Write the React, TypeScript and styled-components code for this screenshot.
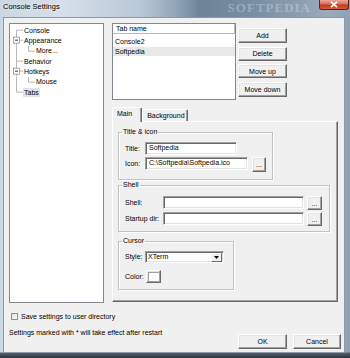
import React from 'react';
import styled, { createGlobalStyle } from 'styled-components';

const GlobalStyle = createGlobalStyle`
  html, body {
    margin: 0;
    padding: 0;
    overflow: hidden;
  }
  body {
    font-family: "Liberation Sans", Arial, sans-serif;
    font-size: 7px;
    color: #000;
  }
`;

const Window = styled.div`
  width: 350px;
  height: 358px;
  display: flex;
  flex-direction: column;
  background:
    linear-gradient(180deg, rgba(0, 0, 0, 0) 352px, #55606c 353px, #2c323a 358px),
    linear-gradient(90deg, #cbd7e3 0px, #d6e0ea 60px, #b9c8d7 140px, #93a6ba 175px, #6e8398 200px, #7b8fa4 260px, #9aabbd 330px, #8fa1b4 350px);
`;

const TitleBar = styled.div`
  height: 17px;
  display: flex;
  align-items: flex-start;
  justify-content: space-between;
  flex-shrink: 0;
`;

const TitleText = styled.div`
  padding-left: 3px;
  font-size: 7.5px;
  line-height: 14px;
  color: #000;
  text-shadow: 0 0 4px rgba(255, 255, 255, 0.9);
`;

const Watermark = styled.div`
  margin-left: auto;
  margin-right: 8px;
  font-family: "Liberation Serif", serif;
  font-weight: bold;
  font-size: 13px;
  line-height: 15px;
  letter-spacing: 1px;
  color: rgba(225, 233, 242, 0.35);
`;

const CloseButton = styled.div`
  width: 30px;
  height: 10px;
  margin-right: 1px;
  box-sizing: border-box;
  border: 1px solid #5c2218;
  border-top: none;
  border-radius: 0 0 3px 3px;
  background: linear-gradient(180deg, #e9a998 0%, #d9705a 45%, #c2391d 55%, #d45b3c 100%);
  display: flex;
  align-items: center;
  justify-content: center;
`;

const Client = styled.div`
  flex: 1;
  margin: 0 5px 5px 3px;
  background: #f0f0f0;
  border: 1px solid #8898a9;
  display: flex;
  flex-direction: column;
`;

const MainRow = styled.div`
  display: flex;
  gap: 8px;
  padding: 5px 0 0 5px;
`;

const TreeBox = styled.div`
  width: 95px;
  height: 280px;
  box-sizing: border-box;
  background: #fff;
  border: 1px solid #828790;
  padding-top: 1px;
`;

const TreeRow = styled.div`
  height: 10.33px;
  display: flex;
  align-items: center;
`;

const TreeLabel = styled.span<{ $selected?: boolean }>`
  padding: 0 1px;
  line-height: 9px;
  background: ${({ $selected }) => ($selected ? '#e3e3e3' : 'transparent')};
`;

const RightCol = styled.div`
  width: 226px;
  display: flex;
  flex-direction: column;
`;

const TopRow = styled.div`
  display: flex;
  gap: 2px;
`;

const ListBox = styled.div`
  width: 124px;
  height: 77px;
  box-sizing: border-box;
  background: #fff;
  border: 1px solid #828790;
`;

const ListHeader = styled.div`
  height: 10px;
  box-sizing: border-box;
  border-bottom: 1px solid #b9b9b9;
  border-right: 1px solid #b9b9b9;
  padding-left: 3px;
  line-height: 9px;
  background: #fff;
`;

const ListItems = styled.div`
  padding-top: 3px;
`;

const ListItem = styled.div<{ $selected?: boolean }>`
  height: 9.5px;
  line-height: 9.5px;
  padding-left: 2px;
  background: ${({ $selected }) => ($selected ? '#e8e8e8' : 'transparent')};
`;

const ButtonCol = styled.div`
  width: 49px;
  padding-top: 5px;
  display: flex;
  flex-direction: column;
  gap: 3.5px;
`;

const Button = styled.div<{ $w?: number; $h?: number }>`
  width: ${({ $w }) => $w ?? 49}px;
  height: ${({ $h }) => $h ?? 15}px;
  box-sizing: border-box;
  background: #f0f0f0;
  border-style: solid;
  border-width: 1px;
  border-color: #ffffff #696969 #696969 #ffffff;
  box-shadow: inset -1px -1px 0 #a0a0a0, inset 1px 1px 0 #e3e3e3;
  display: flex;
  align-items: center;
  justify-content: center;
  line-height: 1;
  flex-shrink: 0;
`;

const Tabs = styled.div`
  margin-top: 7px;
  display: flex;
  flex-direction: column;
`;

const TabStrip = styled.div`
  height: 14px;
  display: flex;
  align-items: flex-end;
  position: relative;
  z-index: 1;
`;

const Tab = styled.div<{ $active?: boolean }>`
  height: ${({ $active }) => ($active ? 15 : 12)}px;
  margin-bottom: ${({ $active }) => ($active ? -1 : 0)}px;
  box-sizing: border-box;
  padding: 0 ${({ $active }) => ($active ? 9 : 2)}px 0 4px;
  background: #f0f0f0;
  border-style: solid;
  border-width: 1px 1px 0 1px;
  border-color: #ffffff #696969 transparent #ffffff;
  box-shadow: inset -1px 0 0 #a0a0a0;
  border-radius: 2px 2px 0 0;
  line-height: ${({ $active }) => ($active ? 12 : 11)}px;
`;

const Pane = styled.div`
  height: 181px;
  box-sizing: border-box;
  border-style: solid;
  border-width: 1px;
  border-color: #ffffff #696969 #696969 #ffffff;
  box-shadow: inset -1px -1px 0 #a0a0a0;
  padding-left: 5px;
  display: flex;
  flex-direction: column;
  align-items: flex-start;
`;

const Group = styled.fieldset<{ $w: number; $top: number; $pt: number; $pb: number }>`
  width: ${({ $w }) => $w}px;
  box-sizing: border-box;
  margin: ${({ $top }) => $top}px 0 0 0;
  padding: ${({ $pt }) => $pt}px 0 ${({ $pb }) => $pb}px 0;
  border: 1px solid #c2c2c2;
  box-shadow: inset 1px 1px 0 #fff, 1px 1px 0 #fff;
  min-width: 0;
`;

const Legend = styled.legend`
  margin-left: 3px;
  padding: 0 1px;
  font-size: 7px;
  line-height: 8px;
`;

const FieldRow = styled.div<{ $h: number; $gap?: number; $ml: number }>`
  height: ${({ $h }) => $h}px;
  margin-left: ${({ $ml }) => $ml}px;
  margin-top: ${({ $gap }) => $gap ?? 0}px;
  display: flex;
  align-items: flex-start;
`;

const FieldLabel = styled.div<{ $w: number; $lh: number }>`
  width: ${({ $w }) => $w}px;
  line-height: ${({ $lh }) => $lh}px;
  flex-shrink: 0;
`;

const Edit = styled.div<{ $w: number; $h?: number }>`
  width: ${({ $w }) => $w}px;
  height: ${({ $h }) => $h ?? 13}px;
  box-sizing: border-box;
  background: #fff;
  border-style: solid;
  border-width: 1px;
  border-color: #a0a0a0 #ffffff #ffffff #a0a0a0;
  box-shadow: inset 1px 1px 0 #696969, inset -1px -1px 0 #e3e3e3;
  padding-left: 3px;
  line-height: 10px;
  white-space: nowrap;
  overflow: hidden;
  flex-shrink: 0;
`;

const Select = styled(Edit)`
  display: flex;
  justify-content: space-between;
  align-items: center;
  padding: 0 1px 0 2px;
`;

const SelectArrow = styled.div`
  width: 11px;
  height: 9px;
  box-sizing: border-box;
  background: #f0f0f0;
  border-style: solid;
  border-width: 1px;
  border-color: #ffffff #696969 #696969 #ffffff;
  display: flex;
  align-items: center;
  justify-content: center;
`;

const ColorSwatch = styled.div`
  width: 12px;
  height: 10px;
  background: #fff;
  border: 1px solid #a0a0a0;
  box-sizing: border-box;
`;

const Footer = styled.div`
  display: flex;
  justify-content: space-between;
  padding: 0 3px 0 7px;
`;

const FooterLeft = styled.div`
  display: flex;
  flex-direction: column;
`;

const CheckRow = styled.div`
  margin-top: 9px;
  height: 8px;
  display: flex;
  align-items: center;
  gap: 3px;
`;

const CheckBox = styled.div`
  width: 7px;
  height: 7px;
  box-sizing: border-box;
  border: 1px solid #8e8f8f;
  background: linear-gradient(135deg, #dcdcdc, #ffffff);
`;

const Note = styled.div`
  margin-top: 8px;
  margin-left: -2px;
  line-height: 9px;
`;

const FooterButtons = styled.div`
  margin-top: 31px;
  display: flex;
  gap: 6px;
`;

type Node = {
  label: string;
  level: 0 | 1;
  box?: boolean;
  first?: boolean;
  last?: boolean;
  selected?: boolean;
};

const nodes: Node[] = [
  { label: 'Console', level: 0, first: true },
  { label: 'Appearance', level: 0, box: true },
  { label: 'More...', level: 1 },
  { label: 'Behavior', level: 0 },
  { label: 'Hotkeys', level: 0, box: true },
  { label: 'Mouse', level: 1 },
  { label: 'Tabs', level: 0, last: true, selected: true },
];

const LINE = '#a4a4a4';

function Connector({ node }: { node: Node }) {
  const w = node.level === 0 ? 13 : 25;
  const h = 10.33;
  const c = h / 2;
  const rootTop = node.level === 0 && node.first ? c : 0;
  const rootBottom = node.level === 0 && node.last ? c : h;
  return (
    <svg width={w} height={h} style={{ flexShrink: 0 }}>
      <line x1={6.5} y1={rootTop} x2={6.5} y2={rootBottom} stroke={LINE} strokeWidth={0.8} />
      {node.level === 0 && <line x1={6.5} y1={c} x2={13} y2={c} stroke={LINE} strokeWidth={0.8} />}
      {node.level === 1 && (
        <>
          <line x1={18.5} y1={0} x2={18.5} y2={c} stroke={LINE} strokeWidth={0.8} />
          <line x1={18.5} y1={c} x2={25} y2={c} stroke={LINE} strokeWidth={0.8} />
        </>
      )}
      {node.box && (
        <>
          <rect x={3.5} y={c - 3} width={6} height={6} fill="#fff" stroke="#919191" strokeWidth={0.8} />
          <line x1={5} y1={c} x2={8} y2={c} stroke="#000" strokeWidth={0.8} />
        </>
      )}
    </svg>
  );
}

export default function App() {
  return (
    <>
      <GlobalStyle />
      <Window>
        <TitleBar>
          <TitleText>Console Settings</TitleText>
          <Watermark>SOFTPEDIA</Watermark>
          <CloseButton>
            <svg width="8" height="7" viewBox="0 0 8 7">
              <path d="M1 0.8 L7 6.2 M7 0.8 L1 6.2" stroke="#fff" strokeWidth="1.6" />
            </svg>
          </CloseButton>
        </TitleBar>

        <Client>
          <MainRow>
            <TreeBox>
              {nodes.map((n) => (
                <TreeRow key={n.label}>
                  <Connector node={n} />
                  <TreeLabel $selected={n.selected}>{n.label}</TreeLabel>
                </TreeRow>
              ))}
            </TreeBox>

            <RightCol>
              <TopRow>
                <ListBox>
                  <ListHeader>Tab name</ListHeader>
                  <ListItems>
                    <ListItem>Console2</ListItem>
                    <ListItem $selected>Softpedia</ListItem>
                  </ListItems>
                </ListBox>
                <ButtonCol>
                  <Button>Add</Button>
                  <Button $h={14}>Delete</Button>
                  <Button $h={14}>Move up</Button>
                  <Button>Move down</Button>
                </ButtonCol>
              </TopRow>

              <Tabs>
                <TabStrip>
                  <Tab $active>Main</Tab>
                  <Tab>Background</Tab>
                </TabStrip>
                <Pane>
                  <Group $w={155} $top={6} $pt={6} $pb={7}>
                    <Legend>Title &amp; icon</Legend>
                    <FieldRow $h={13} $ml={6}>
                      <FieldLabel $w={20} $lh={13}>Title:</FieldLabel>
                      <Edit $w={92}>Softpedia</Edit>
                    </FieldRow>
                    <FieldRow $h={15} $gap={2} $ml={6}>
                      <FieldLabel $w={20} $lh={13}>Icon:</FieldLabel>
                      <Edit $w={103}>C:\Softpedia\Softpedia.ico</Edit>
                      <Button $w={14} $h={15} style={{ marginLeft: 4 }}>...</Button>
                    </FieldRow>
                  </Group>

                  <Group $w={212} $top={1} $pt={7} $pb={5}>
                    <Legend>Shell</Legend>
                    <FieldRow $h={14} $ml={6}>
                      <FieldLabel $w={38} $lh={13}>Shell:</FieldLabel>
                      <Edit $w={141} />
                      <Button $w={15} $h={14} style={{ marginLeft: 3 }}>...</Button>
                    </FieldRow>
                    <FieldRow $h={14} $gap={2} $ml={6}>
                      <FieldLabel $w={38} $lh={13}>Startup dir:</FieldLabel>
                      <Edit $w={141} />
                      <Button $w={15} $h={14} style={{ marginLeft: 3 }}>...</Button>
                    </FieldRow>
                  </Group>

                  <Group $w={116} $top={5} $pt={6} $pb={6}>
                    <Legend>Cursor</Legend>
                    <FieldRow $h={12} $ml={6}>
                      <FieldLabel $w={20} $lh={12}>Style:</FieldLabel>
                      <Select $w={79} $h={12}>
                        <span>XTerm</span>
                        <SelectArrow>
                          <svg width="5" height="3" viewBox="0 0 5 3">
                            <path d="M0 0 H5 L2.5 3 Z" fill="#000" />
                          </svg>
                        </SelectArrow>
                      </Select>
                    </FieldRow>
                    <FieldRow $h={13} $gap={7} $ml={6}>
                      <FieldLabel $w={21} $lh={13}>Color:</FieldLabel>
                      <Button $w={15} $h={13}>
                        <ColorSwatch />
                      </Button>
                    </FieldRow>
                  </Group>
                </Pane>
              </Tabs>
            </RightCol>
          </MainRow>

          <Footer>
            <FooterLeft>
              <CheckRow>
                <CheckBox />
                <span>Save settings to user directory</span>
              </CheckRow>
              <Note>Settings marked with * will take effect after restart</Note>
            </FooterLeft>
            <FooterButtons>
              <Button>OK</Button>
              <Button $w={48}>Cancel</Button>
            </FooterButtons>
          </Footer>
        </Client>
      </Window>
    </>
  );
}
